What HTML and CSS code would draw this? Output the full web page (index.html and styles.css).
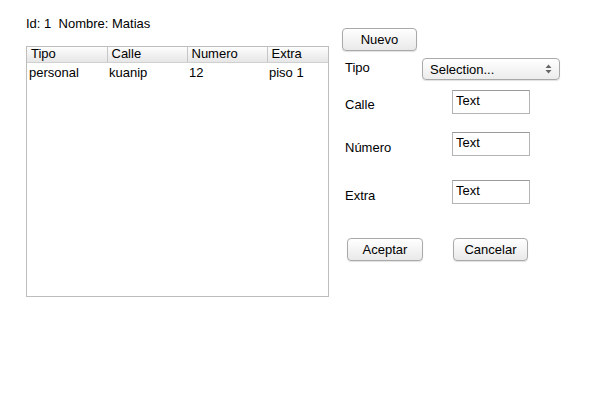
FILE: index.html
```html
<!DOCTYPE html>
<html lang="es">
<head>
  <meta charset="UTF-8" />
  <title>Direcciones</title>
  <link rel="stylesheet" href="styles.css">
</head>
<body>
  <div class="page">
    <!-- Lista de direcciones -->
    <div class="left">
      <p class="person">Id: 1&nbsp; Nombre: Matias</p>
      <div class="grid-box">
        <table class="grid">
          <colgroup><col class="c80"><col class="c80"><col class="c80"><col></colgroup>
          <thead>
            <tr><th>Tipo</th><th>Calle</th><th>Numero</th><th>Extra</th></tr>
          </thead>
          <tbody>
            <tr><td>personal</td><td>kuanip</td><td>12</td><td>piso 1</td></tr>
          </tbody>
        </table>
      </div>
    </div>
    <!-- Formulario -->
    <div class="right">
      <button class="btn btn-new">Nuevo</button>
      <div class="row row-tipo">
        <label class="lbl lbl-tipo">Tipo</label>
        <div class="select">
          <span>Selection...</span>
          <svg width="7" height="10" viewBox="0 0 7 10"><path d="M3.5 0.5 L6.5 4 L0.5 4 Z M0.5 6 L6.5 6 L3.5 9.5 Z" fill="#666"/></svg>
        </div>
      </div>
      <div class="row row-calle">
        <label class="lbl">Calle</label>
        <input class="txt" value="Text">
      </div>
      <div class="row row-numero">
        <label class="lbl">Número</label>
        <input class="txt" value="Text">
      </div>
      <div class="row row-extra">
        <label class="lbl">Extra</label>
        <input class="txt" value="Text">
      </div>
      <div class="actions">
        <button class="btn btn-ok">Aceptar</button>
        <button class="btn btn-cancel">Cancelar</button>
      </div>
    </div>
  </div>
</body>
</html>
```

FILE: styles.css
```css
* { margin:0; padding:0; box-sizing:border-box; }
html, body { height:100%; background:#fff; }
body { font-family:"Liberation Sans", Arial, sans-serif; font-size:13px; color:#000; }
.page { display:flex; padding-left:26px; }

.left { width:303px; padding-top:16px; }
.person { line-height:15px; height:15px; }
.grid-box { margin-top:15px; height:251px; border:1px solid #bdbdbd; }
.grid { width:100%; border-collapse:collapse; table-layout:fixed; }
.grid .c80 { width:80px; }
.grid th { height:15px; font-weight:normal; text-align:left; line-height:14px; padding:0 4px; background:linear-gradient(#fdfdfd, #e6e6e6); border-bottom:1px solid #d0d0d0; border-left:1px solid #c6c6c6; }
.grid th:first-child { border-left:none; }
.grid td { line-height:20px; padding:0 2px; white-space:nowrap; }

.right { margin-left:13px; padding-top:28px; width:230px; }
.btn { font-family:inherit; font-size:13px; color:#000; height:23px; border:1px solid #a9a9a9; border-radius:4px; background:linear-gradient(#ffffff, #e9e9e9); box-shadow:0 1px 1px rgba(0,0,0,0.12); }
.btn-new { width:75px; display:block; }
.row { display:flex; align-items:flex-start; }
.lbl { display:block; width:107px; margin-left:3px; line-height:15px; padding-top:7px; }
.lbl-tipo { width:77px; padding-top:2px; }
.row-numero .lbl, .row-extra .lbl { padding-top:8px; }
.row-tipo { margin-top:7px; }
.row-calle { margin-top:10px; }
.row-numero { margin-top:18px; }
.row-extra { margin-top:24px; }
.select { width:138px; height:22px; display:flex; align-items:center; justify-content:space-between; padding:0 7px 0 7px; border:1px solid #a9a9a9; border-radius:4px; background:linear-gradient(#ffffff, #ececec); box-shadow:0 1px 1px rgba(0,0,0,0.12); }
.txt { width:78px; height:24px; font-family:inherit; font-size:13px; color:#000; padding:0 3px 3px; border:1px solid #b4b4b4; border-top-color:#9a9a9a; outline:none; }
.actions { display:flex; margin-top:34px; }
.btn-ok { width:76px; margin-left:5px; }
.btn-cancel { width:75px; margin-left:30px; }
```
